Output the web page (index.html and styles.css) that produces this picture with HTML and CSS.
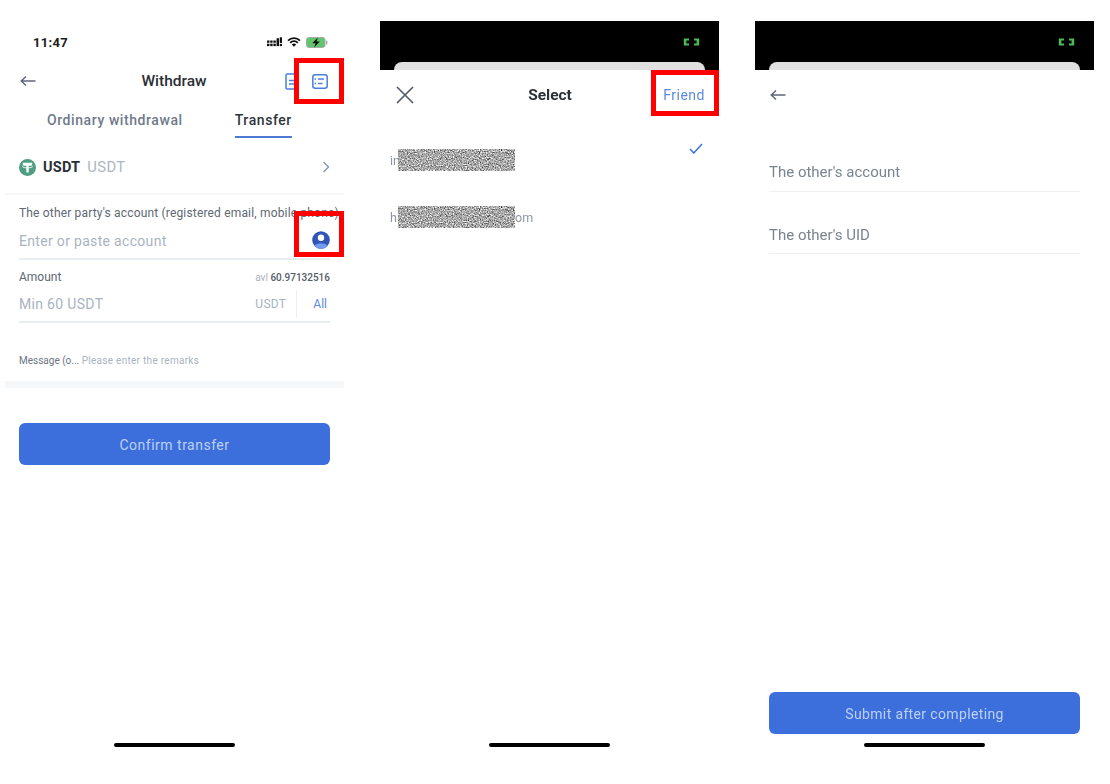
FILE: index.html
```html
<!DOCTYPE html>
<html lang="en">
<head>
<meta charset="utf-8">
<title>Transfer steps</title>
<link rel="stylesheet" href="styles.css">
</head>
<body>
<svg class="defs" width="0" height="0" aria-hidden="true">
  <filter id="noise" x="0" y="0" width="100%" height="100%" color-interpolation-filters="sRGB">
    <feTurbulence type="fractalNoise" baseFrequency="0.85" numOctaves="2" seed="4"/>
    <feColorMatrix type="matrix" values="0.7 0.7 0.7 0 -0.39 0.7 0.7 0.7 0 -0.39 0.7 0.7 0.7 0 -0.39 0 0 0 0 1"/>
  </filter>
</svg>
<main class="page">

  <section class="phone">
    <div class="status">
      <span class="time">11:47</span>
      <span class="status-icons">
        <svg width="15" height="10" viewBox="0 0 16 10"><g fill="#111"><rect x="0" y="3.400" width="2.600" height="2.400"/><rect x="0" y="6.800" width="2.600" height="2.600"/><rect x="3.400" y="3.400" width="2.600" height="2.400"/><rect x="3.400" y="6.800" width="2.600" height="2.600"/><rect x="6.800" y="3.400" width="2.600" height="2.400"/><rect x="6.800" y="6.800" width="2.600" height="2.600"/><rect x="10.200" y="1" width="2.600" height="8.400"/><rect x="13.600" y="0" width="2.400" height="6"/><rect x="13.600" y="7" width="2.400" height="2.400"/></g></svg>
        <svg width="14" height="10" viewBox="0 0 14 10"><path d="M1 3.600a8.400 8.400 0 0 1 12 0M3.200 5.800a5.200 5.200 0 0 1 7.600 0" fill="none" stroke="#111" stroke-width="1.800"/><path d="M7 9.800 4.800 7.600a3 3 0 0 1 4.400 0z" fill="#111"/></svg>
        <svg width="22" height="11" viewBox="0 0 22 11"><rect x=".5" y=".5" width="18.500" height="10" rx="2.400" fill="#62c46c" stroke="#a3aca5"/><rect x="20" y="3.500" width="1.400" height="4" rx=".7" fill="#a3aca5"/><path d="M11.800 .6 6.300 6.200h3.200L8.200 10.400l5.600-5.800h-3.200z" fill="#111"/></svg>
      </span>
    </div>
    <header class="nav">
      <svg class="nav-back" width="16" height="12" viewBox="0 0 16 12"><path d="M15.500 6H1.200M6 1.400 1.200 6 6 10.600" fill="none" stroke="#5d6675" stroke-width="1.400"/></svg>
      <h1 class="title">Withdraw</h1>
      <span class="nav-actions">
        <svg width="13" height="17" viewBox="0 0 13 17"><path d="M1 2.200A1.200 1.200 0 0 1 2.200 1h8.600A1.200 1.200 0 0 1 12 2.200v12.600a1.200 1.200 0 0 1-1.200 1.200H2.200A1.200 1.200 0 0 1 1 14.800z" fill="none" stroke="#4a7fe0" stroke-width="1.500"/><path d="M4 7.500h6M4 11h6" stroke="#4a7fe0" stroke-width="1.400"/></svg>
        <svg width="16" height="15" viewBox="0 0 16 15"><rect x=".8" y=".8" width="14.400" height="13.400" rx="2.500" fill="none" stroke="#4a7fe0" stroke-width="1.500"/><path d="M6 5h6M6 9.500h4.500M2.500 5h1.500M2.500 9.500h1.500" stroke="#4a7fe0" stroke-width="1.400"/></svg>
      </span>
    </header>
    <nav class="tabs">
      <span class="tab">Ordinary withdrawal</span>
      <span class="tab tab-active">Transfer</span>
    </nav>
    <div class="coin">
      <svg width="17" height="17" viewBox="0 0 17 17"><circle cx="8.500" cy="8.500" r="8.500" fill="#4f9d82"/><path d="M3.800 3.800h9.400v2.200H9.700v7.400H7.300V6H3.800z" fill="#fff"/><ellipse cx="8.500" cy="7.600" rx="5" ry="1.300" fill="none" stroke="#fff" stroke-width=".8"/></svg>
      <strong class="coin-name">USDT</strong>
      <span class="coin-sub">USDT</span>
      <svg class="coin-arrow" width="8" height="12" viewBox="0 0 8 12"><path d="M1.500 1 6.500 6l-5 5" fill="none" stroke="#8f9bab" stroke-width="1.500"/></svg>
    </div>
    <div class="form">
      <p class="field-label clip">The other party's account (registered email, mobile phone)</p>
      <div class="field field-account">
        <span class="placeholder">Enter or paste account</span>
        <svg width="18" height="18" viewBox="0 0 18 18"><circle cx="9" cy="9" r="8.800" fill="#2f55b5"/><circle cx="9" cy="6.700" r="3.200" fill="#fff"/><path d="M2.300 14.800a7.500 4.800 0 0 1 13.400 0A8.800 8.800 0 0 1 2.300 14.800z" fill="#6f9bf0"/></svg>
      </div>
      <div class="amount-head">
        <span class="field-label">Amount</span>
        <span class="avl">avl <b>60.97132516</b></span>
      </div>
      <div class="field field-amount">
        <span class="placeholder">Min 60 USDT</span>
        <span class="unit">USDT</span>
        <span class="all">All</span>
      </div>
      <p class="message"><span class="message-label">Message (o...</span> <span class="message-hint">Please enter the remarks</span></p>
    </div>
    <div class="band"></div>
    <button class="cta cta-confirm" type="button">Confirm transfer</button>
    <div class="home"></div>
    <div class="mark mark-top"></div>
    <div class="mark mark-mid"></div>
  </section>

  <section class="phone">
    <div class="dark">
      <svg class="green" width="17" height="8" viewBox="0 0 17 8"><path d="M6 .6H.8v6.800H6V5.600H3.400V2.400H6zM11 .6h5.200v6.800H11V5.600h2.600V2.400H11z" fill="#4fb955"/></svg>
    </div>
    <div class="back-card"></div>
    <div class="sheet">
      <header class="sheet-head">
        <svg class="close" width="20" height="20" viewBox="0 0 20 20"><path d="M2 2l16 16M18 2 2 18" stroke="#535c6b" stroke-width="1.700" fill="none"/></svg>
        <h2 class="title">Select</h2>
        <span class="friend">Friend</span>
      </header>
      <ul class="accounts">
        <li class="account">
          <span class="acc-text acc-under">in</span>
          <svg class="redact" width="117" height="22"><rect width="117" height="22" filter="url(#noise)"/></svg>
          <svg class="check" width="14" height="11" viewBox="0 0 14 11"><path d="M1 6l3.800 4L13 1" fill="none" stroke="#3f78e6" stroke-width="1.600"/></svg>
        </li>
        <li class="account">
          <span class="acc-text acc-under">hi</span>
          <svg class="redact" width="117" height="22"><rect width="117" height="22" filter="url(#noise)"/></svg>
          <span class="acc-text">om</span>
        </li>
      </ul>
    </div>
    <div class="home home-sheet"></div>
    <div class="mark mark-friend"></div>
  </section>

  <section class="phone">
    <div class="dark">
      <svg class="green" width="17" height="8" viewBox="0 0 17 8"><path d="M6 .6H.8v6.800H6V5.600H3.400V2.400H6zM11 .6h5.200v6.800H11V5.600h2.600V2.400H11z" fill="#4fb955"/></svg>
    </div>
    <div class="back-card"></div>
    <div class="sheet sheet-fill">
      <header class="sheet-head">
        <svg width="16" height="12" viewBox="0 0 16 12"><path d="M15.500 6H1.200M6 1.400 1.200 6 6 10.600" fill="none" stroke="#5d6675" stroke-width="1.400"/></svg>
      </header>
      <div class="entry entry-first">The other's account</div>
      <div class="entry">The other's UID</div>
      <button class="cta cta-submit" type="button">Submit after completing</button>
    </div>
    <div class="home home-sheet"></div>
  </section>

</main>
</body>
</html>
```
FILE: styles.css
```css
* { box-sizing: border-box; }
html, body { margin: 0; padding: 0; background: #fff; }
body { font-family: Roboto, "Liberation Sans", sans-serif; overflow: hidden; }
.defs { position: absolute; }
.page {
  display: flex;
  gap: 36px;
  padding: 21px 0 0 5px;
  height: 784px;
  filter: blur(0.45px);
}
.phone {
  position: relative;
  width: 339px;
  height: 734px;
  display: flex;
  flex-direction: column;
  background: #fff;
}

/* status + nav */
.status {
  display: flex;
  align-items: center;
  justify-content: space-between;
  height: 42px;
  padding: 0 16px 0 28px;
}
.time { font-size: 13px; font-weight: 700; color: #1c1c1e; letter-spacing: .3px; }
.status-icons { display: flex; align-items: center; gap: 5px; }
.nav {
  display: grid;
  grid-template-columns: 1fr auto 1fr;
  align-items: center;
  height: 36px;
  padding: 0 16px 0 15px;
}
.title { margin: 0; font-size: 15.500px; font-weight: 500; color: #2b2f36; text-align: center; }
.nav-actions { display: flex; justify-content: flex-end; align-items: center; gap: 14px; }

/* tabs */
.tabs {
  display: flex;
  height: 40px;
  padding: 3px 0 0 42px;
  gap: 52px;
}
.tab {
  height: 36px;
  font-size: 14px;
  line-height: 36px;
  font-weight: 500;
  letter-spacing: .58px;
  color: #6f7a8b;
}
.tab-active { width: 57px; color: #2f343c; border-bottom: 2px solid #4a7bd0; white-space: nowrap; }

/* coin row */
.coin {
  display: flex;
  align-items: center;
  height: 56px;
  padding: 2px 14px 0;
  border-bottom: 2px solid #f6f7f9;
}
.coin-name { margin-left: 7px; font-size: 14.500px; font-weight: 700; color: #2b2f36; letter-spacing: .2px; }
.coin-sub { margin-left: 7px; font-size: 14.800px; color: #adb6c3; letter-spacing: .4px; }
.coin-arrow { margin-left: auto; }

/* form */
.form { padding: 0 14px; }
.field-label { margin: 0; font-size: 12px; color: #606874; }
.clip { padding-top: 11px; height: 27px; line-height: 14px; letter-spacing: .17px; white-space: nowrap; width: 320px; overflow: hidden; }
.field { display: flex; align-items: center; border-bottom: 2px solid #e9eef3; }
.field-account { height: 38px; justify-content: space-between; padding-top: 2px; }
.field-account svg { margin-top: -2px; }
.placeholder { font-size: 14px; letter-spacing: .32px; color: #a9b3c0; }
.amount-head {
  display: flex;
  justify-content: space-between;
  align-items: center;
  height: 32px;
  padding-top: 2px;
}
.avl { font-size: 10px; color: #a9b3c0; }
.avl b { font-weight: 500; color: #555c68; }
.field-amount { height: 31px; padding-bottom: 6px; }
.unit { margin-left: auto; padding-right: 10px; border-right: 1px solid #eef1f4; font-size: 12px; line-height: 28px; color: #a9b3c0; letter-spacing: .3px; }
.all { margin: 0 3px 0 16px; font-size: 12px; color: #5b8ae0; }
.message { margin: 29px 0 0; height: 17px; font-size: 10px; line-height: 17px; }
.message-label { color: #6c7480; }
.message-hint { color: #a9b3c0; letter-spacing: .28px; }
.band { height: 7px; margin-top: 12px; background: #f6f7f9; }

/* buttons */
.cta {
  display: block;
  width: 311px;
  height: 42px;
  padding: 1px 0 0;
  border: 0;
  border-radius: 6px;
  background: #3c6fdc;
  color: #bcd0f5;
  font: 400 14px Roboto, sans-serif;
  letter-spacing: .5px;
}
.cta-confirm { margin: 35px 0 0 14px; }
.cta-submit { margin: auto 0 0 14px; letter-spacing: .36px; }

/* home indicator */
.home { width: 121px; height: 4px; margin: auto auto 0; border-radius: 2px; background: #000; transform: translateY(-8px); }
.home-sheet { margin-top: 0; position: absolute; left: 109px; bottom: 0; }

/* sheets */
.dark { height: 49px; background: #000; display: flex; justify-content: flex-end; padding: 17px 19px 0 0; }
.green { display: block; }
.back-card { position: absolute; left: 14px; right: 14px; top: 41px; height: 20px; border-radius: 8px 8px 0 0; background: #e0e0e0; }
.sheet { position: relative; flex: 1; display: flex; flex-direction: column; background: #fff; border-radius: 12px 12px 0 0; }
.sheet-fill { padding-bottom: 21px; }
.sheet-head {
  display: grid;
  grid-template-columns: 1fr auto 1fr;
  align-items: center;
  height: 50px;
  padding: 0 14px 0 15px;
}
.sheet-head .title { font-weight: 700; font-size: 15.500px; }
.friend { justify-self: end; font-size: 14px; letter-spacing: .5px; color: #5b8ae0; }
.accounts { list-style: none; margin: 29px 0 0; padding: 0; }
.account { display: flex; align-items: center; height: 22px; margin-bottom: 35px; padding-left: 10px; }
.acc-text { font-size: 12.500px; color: #8d95a1; }
.acc-under { width: 8px; white-space: nowrap; }
.redact { display: block; }
.check { margin-left: auto; margin-right: 16px; margin-top: -24px; }

/* entries */
.entry {
  margin: 0 14px;
  height: 62px;
  padding-top: 33px;
  border-bottom: 1px solid #eef0f3;
  font-size: 15px;
  line-height: 20px;
  color: #7b8491;
}
.entry-first { height: 46px; padding-top: 16px; margin-top: 26px; }

/* red marks */
.mark { position: absolute; border: 5px solid #f00; }
.mark-top { left: 289px; top: 37px; width: 50px; height: 46px; }
.mark-mid { left: 289px; top: 190px; width: 50px; height: 46px; }
.mark-friend { left: 271px; top: 49px; width: 68px; height: 46px; }
```
